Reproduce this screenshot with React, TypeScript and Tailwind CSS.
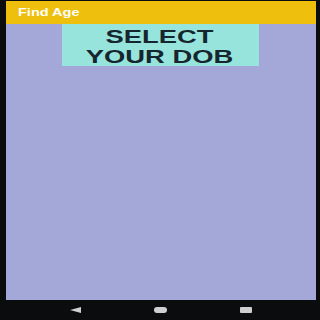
import React from 'react';

export default function App() {
  return (
    <div className="w-[320px] h-[320px] bg-[#0b0c0d] flex flex-col font-['Liberation_Sans',Arial,sans-serif]">
      {/* phone screen */}
      <div className="flex-1 flex flex-col ml-[6px] mr-[4px] mt-[1px] bg-[#a3a8d8]">
        <div className="h-[23px] bg-[#eebf0c] flex items-center pl-[12px]">
          <span className="text-white text-[10px] font-bold origin-left scale-x-[1.45] inline-block">Find Age</span>
        </div>
        <div className="flex justify-center">
          <div className="ml-[-2px] w-[197px] h-[42px] bg-[#97e4dc] flex flex-col items-center pt-[3px] text-[#15262e] text-[18px] leading-[20px] font-bold">
            <span className="inline-block scale-x-[1.52]">SELECT</span>
            <span className="inline-block scale-x-[1.52]">YOUR DOB</span>
          </div>
        </div>
      </div>
      {/* nav bar */}
      <div className="h-[20px] flex items-center">
        <div className="w-[64px]" />
        <svg width="12" height="6" viewBox="0 0 12 6" className="ml-[6px]">
          <polygon points="0,3 11,0 11,6" fill="#cfcfcf" />
        </svg>
        <div className="ml-[72px] w-[13px] h-[6px] rounded-full bg-[#cfcfcf]" />
        <div className="ml-[73px] w-[12px] h-[6px] rounded-[1px] bg-[#cfcfcf]" />
      </div>
    </div>
  );
}
